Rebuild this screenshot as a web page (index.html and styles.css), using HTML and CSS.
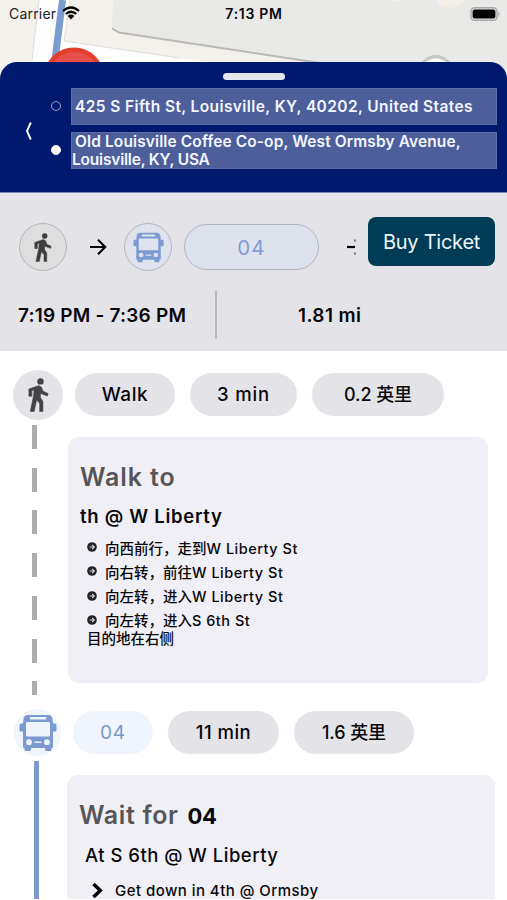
FILE: index.html
```html
<!DOCTYPE html>
<html lang="en">
<head>
<meta charset="utf-8">
<title>Trip details</title>
<link rel="stylesheet" href="styles.css">
</head>
<body>
<svg class="defs" width="0" height="0" aria-hidden="true">
  <symbol id="walk" viewBox="0 0 20 34">
    <circle cx="12" cy="3.400" r="3.200" fill="currentColor"/>
    <path d="M5.500 9.300 10.400 7.600 13 9.200 14.600 13.200 19.600 15.600 18.800 18 12.800 15.800 12.200 14.800 11.800 19.200 14.400 23.400V33.400H11.200V25.600L8.200 21.800 5.600 33.400H1.800L5 18 5.600 11.800 3.400 12.800V18.200H.4V11Z" fill="currentColor" stroke="currentColor" stroke-width=".6" stroke-linejoin="round"/>
  </symbol>
  <symbol id="bus" viewBox="0 0 38 38">
    <path fill="currentColor" fill-rule="evenodd" d="M9 1H29Q33 1 33.500 5L34 9.500H36Q37.500 9.500 37.500 11V16Q37.500 17.500 36 17.500H34V32.500Q34 34 32.500 34V35.500Q32.500 37 31 37H27.500Q26 37 26 35.500V34H12V35.500Q12 37 10.500 37H7Q5.500 37 5.500 35.500V34Q4 34 4 32.500V17.500H2Q.5 17.500 .5 16V11Q.5 9.500 2 9.500H4L4.500 5Q5 1 9 1ZM12 3Q10.700 3 10.700 4.300T12 5.600H26Q27.300 5.600 27.300 4.300T26 3ZM8.500 8Q7 8 7 9.500V21Q7 22.500 8.500 22.500H29.500Q31 22.500 31 21V9.500Q31 8 29.500 8ZM10 25.300A2.900 2.900 0 1 0 10 31.100A2.900 2.900 0 1 0 10 25.300ZM28 25.300A2.900 2.900 0 1 0 28 31.100A2.900 2.900 0 1 0 28 25.300ZM15.500 27.500V29H22.500V27.500Z"/>
  </symbol>
  <symbol id="bullet" viewBox="0 0 10 10">
    <circle cx="5" cy="5" r="4.800" fill="#222226"/>
    <path d="M2.500 5H7M5.200 2.900 7.300 5 5.200 7.100" fill="none" stroke="#d8d8dc" stroke-width="1.100"/>
  </symbol>
</svg>

<div class="screen">
  <section class="map">
    <svg class="map-art" width="507" height="85" viewBox="0 0 507 85">
      <rect width="507" height="85" fill="#f4f0eb"/>
      <path d="M39 0H70L64 41 180 58 380 85H28L32 60Z" fill="#fefefe"/>
      <path d="M39 0 32 60M70 0 64 41 180 58" fill="none" stroke="#dedddb"/>
      <path d="M113 0H507V85H400L315 62 119 32 112 28Z" fill="#e9e9e7"/>
      <path d="M112 28.500 119 32.500 320 63" fill="none" stroke="#b9b9b5" stroke-width="2"/>
      <path d="M386 0H407L397 2ZM436 0H466L458 6 448 8 439 5Z" fill="#f3efe8"/>
      <path d="M62.500 0 55 60" stroke="#7c9ccf" stroke-width="7"/>
      <circle cx="74" cy="78" r="30.500" fill="#e43e2d"/>
      <circle cx="74" cy="78" r="26" fill="#e95049"/>
      <circle cx="436" cy="73" r="18" fill="#c9c8c8"/>
      <circle cx="436" cy="74" r="15.500" fill="#fff"/>
    </svg>
    <div class="status">
      <div class="carrier"><span>Carrier</span>
        <svg width="18" height="14" viewBox="0 0 18 14"><path d="M1 5Q9-2 17 5M3.800 8Q9 3.500 14.200 8" fill="none" stroke="#000" stroke-width="2.300"/><path d="M5.700 10Q9 7.200 12.300 10L9 13.500Z"/></svg>
      </div>
      <span class="clock">7:13 PM</span>
      <svg class="battery" width="31" height="14" viewBox="0 0 31 14"><rect x="1" y=".8" width="26" height="12.400" rx="3.500" fill="#e4e4e2" stroke="#aaa" stroke-width="1.400"/><rect x="2.600" y="2.400" width="22.800" height="9.200" rx="2"/><path d="M28.500 4.500Q30.500 7 28.500 9.500Z" fill="#999"/></svg>
    </div>
  </section>

  <header class="route">
    <div class="handle"></div>
    <div class="route-body">
      <svg class="back" width="9" height="20" viewBox="0 0 9 20"><path d="M6.800 1.500 3 10 6.800 18.500" fill="none" stroke="#fff" stroke-width="1.900"/></svg>
      <div class="stops"><i class="stop"></i><i class="stop stop-end"></i></div>
      <div class="fields">
        <div class="field origin">425 S Fifth St, Louisville, KY, 40202, United States</div>
        <div class="field dest"><span class="dest-a">Old Louisville Coffee Co-op, West Ormsby Avenue,</span><span class="dest-b">Louisville, KY, USA</span></div>
      </div>
    </div>
  </header>

  <section class="summary">
    <div class="legs">
      <div class="leg leg-walk"><svg width="18" height="29"><use href="#walk"/></svg></div>
      <svg class="arrow" width="17" height="18" viewBox="0 0 17 18"><path d="M0 9H15M8 1.800 15.200 9 8 16.200" fill="none" stroke="#000" stroke-width="2.100"/></svg>
      <div class="leg leg-bus"><svg width="31" height="31"><use href="#bus"/></svg></div>
      <div class="leg-line">04</div>
      <svg class="more" width="9" height="18" viewBox="0 0 9 18"><path d="M0 9H8" stroke="#000" stroke-width="2.200"/><path d="M7 1.500H9V3.500H7ZM7 14.500H9V16.500H7Z" fill="#777"/></svg>
      <button class="buy">Buy Ticket</button>
    </div>
    <div class="totals">
      <span class="time">7:19 PM - 7:36 PM</span>
      <span class="divider"></span>
      <span class="distance">1.81 mi</span>
    </div>
  </section>

  <main class="steps">
    <section class="step step-walk">
      <div class="rail">
        <div class="badge"><svg width="21" height="34"><use href="#walk"/></svg></div>
        <div class="dashes"></div>
      </div>
      <div class="detail">
        <div class="pills"><span class="pill p-mode">Walk</span><span class="pill p-time">3 min</span><span class="pill p-dist">0.2 英里</span></div>
        <article class="card">
          <h2>Walk to</h2>
          <h3>th @ W Liberty</h3>
          <ul>
            <li><svg width="10" height="10"><use href="#bullet"/></svg><span>向西前行，走到<b>W Liberty St</b></span></li>
            <li><svg width="10" height="10"><use href="#bullet"/></svg><span>向右转，前往<b>W Liberty St</b></span></li>
            <li><svg width="10" height="10"><use href="#bullet"/></svg><span>向左转，进入<b>W Liberty St</b></span></li>
            <li><svg width="10" height="10"><use href="#bullet"/></svg><span>向左转，进入<b>S 6th St</b></span></li>
          </ul>
          <p class="arrive">目的地在右侧</p>
        </article>
      </div>
    </section>

    <section class="step step-bus">
      <div class="rail">
        <div class="badge"><svg width="38" height="38"><use href="#bus"/></svg></div>
        <div class="line"></div>
      </div>
      <div class="detail">
        <div class="pills"><span class="pill p-route">04</span><span class="pill p-time">11 min</span><span class="pill p-dist">1.6 英里</span></div>
        <article class="card">
          <h2>Wait for <strong>04</strong></h2>
          <p class="at">At S 6th @ W Liberty</p>
          <p class="down"><svg width="11" height="17" viewBox="0 0 11 17"><path d="M1.500 2 8.300 8.500 1.500 15" fill="none" stroke="#000" stroke-width="3.500"/></svg><span>Get down in 4th @ Ormsby</span></p>
        </article>
      </div>
    </section>
  </main>
</div>
</body>
</html>
```
FILE: styles.css
```css
* { box-sizing: border-box; margin: 0; padding: 0; }
body { background: #fff; color: #08080a; font-family: Inter, "Noto Sans CJK SC", sans-serif; }
svg { display: block; flex: none; }
.defs { position: absolute; }
.screen { width: 507px; height: 899px; overflow: hidden; }

.map { position: relative; height: 62px; }
.map-art { position: absolute; top: 0; left: 0; }
.status { position: relative; display: grid; grid-template-columns: 1fr auto 1fr; align-items: center; height: 27px; padding: 0 6px 0 9px; }
.carrier { display: flex; align-items: center; gap: 6px; font-size: 14px; letter-spacing: .19px; color: #222; }
.carrier svg { margin-top: -2px; }
.clock { margin-left: -2px; font-size: 14px; font-weight: 600; letter-spacing: .7px; }
.battery { justify-self: end; }

.route { position: relative; height: 131px; padding: 11px 10px 0 24px; background: #00196f; border-radius: 17px 17px 0 0; border-bottom: 1px solid #7885b4; }
.handle { width: 62px; height: 7px; margin-left: 199px; border-radius: 4px; background: #e5e7ee; }
.route-body { display: flex; margin-top: 8px; }
.back { margin-top: 33px; }
.stops { width: 10px; margin: 13px 10px 0 18px; display: flex; flex-direction: column; gap: 34px; }
.stop { width: 10px; height: 10px; border: 1.500px solid #9aa4d0; border-radius: 50%; }
.stop-end { background: #fff; border-color: #fff; }
.fields { flex: 1; display: flex; flex-direction: column; gap: 7px; color: #f3f6ff; font-size: 15.500px; font-weight: 600; white-space: nowrap; }
.field { height: 37px; background: #4d5f9b; border: 1px solid #5c6ca5; }
.origin { padding-left: 3px; line-height: 35px; letter-spacing: .4px; }
.dest { display: flex; flex-direction: column; line-height: 17.500px; }
.dest-a { padding-left: 3px; letter-spacing: .11px; }
.dest-b { letter-spacing: -.2px; }

.summary { height: 158px; padding-top: 24px; background: #e4e3e8; }
.legs { display: flex; align-items: center; height: 60px; padding-left: 19px; }
.leg { width: 48px; height: 48px; display: grid; place-items: center; border: 1.500px solid #b5b6bb; border-radius: 50%; }
.leg-walk { background: #dedede; color: #3e3e40; }
.leg-bus { margin-left: 17px; background: #dee3ed; color: #7b9bd3; }
.arrow { margin-left: 23px; }
.leg-line { width: 135px; height: 46px; margin-left: 12px; line-height: 45px; text-align: center; font-size: 20.500px; letter-spacing: 1.200px; color: #7f9dd4; border: 1.500px solid #b2b7c2; border-radius: 23px; background: #dde2ec; }
.more { margin-left: 28px; }
.buy { align-self: flex-start; width: 127px; height: 49px; margin-left: 12px; border: 0; border-radius: 8px; background: #003c56; color: #eaf6fb; font: 400 20px Inter, sans-serif; letter-spacing: -.25px; }
.totals { display: flex; align-items: center; height: 48px; margin-top: 14px; padding-left: 18px; font-size: 19px; font-weight: 600; white-space: nowrap; }
.time { width: 197px; letter-spacing: .2px; }
.divider { width: 2px; height: 48px; background: #b8b8bd; }
.distance { margin-left: 81px; letter-spacing: .39px; }

.step { display: flex; }
.step-walk { height: 357px; padding-top: 19px; }
.step-bus { height: 191px; }
.rail { width: 67px; flex: none; display: flex; flex-direction: column; }
.badge { display: grid; place-items: center; border-radius: 50%; background: #e3e3e8; color: #434345; }
.step-walk .badge { width: 50px; height: 50px; margin-left: 13px; }
.step-bus .badge { width: 47px; height: 47px; margin: 1px 0 0 14px; background: #f0f5fc; color: #7b9bd0; }
.dashes { width: 5px; height: 270px; margin: 5px 0 0 32px; background: repeating-linear-gradient(#adadaf 0 24px, #fff 24px 42.750px); }
.line { width: 5px; height: 138px; margin: 5px 0 0 34px; background: #7b99cb; }
.detail { flex: 1; }
.pills { display: flex; gap: 15px; margin-left: 8px; }
.step-walk .pills { margin-top: 3px; }
.step-bus .pills { margin: 3px 0 0 6px; }
.pill { height: 43px; border-radius: 22px; background: #e4e3e8; text-align: center; line-height: 43px; font-size: 18px; font-weight: 500; white-space: nowrap; }
.p-mode { width: 100px; font-size: 19px; letter-spacing: .6px; }
.p-time { width: 107px; font-size: 18.500px; letter-spacing: .8px; }
.p-dist { width: 132px; letter-spacing: -.1px; }
.p-route { width: 80px; font-size: 19px; font-weight: 400; letter-spacing: .8px; background: #f0f5fd; color: #7998ca; }
.step-bus .p-time { width: 111px; letter-spacing: .5px; }
.step-bus .p-dist { width: 120px; }

.card { background: #f0eff5; border-radius: 11px; }
.step-walk .card { width: 420px; height: 246px; margin: 21px 0 0 1px; padding: 25px 12px 0; }
.step-bus .card { width: 428px; height: 140px; margin-top: 21px; padding: 25px 12px 0; }
h2 { font-size: 25px; line-height: 30px; font-weight: 600; letter-spacing: .9px; color: #565658; white-space: nowrap; }
.step-bus h2 { letter-spacing: .65px; }
h2 strong { margin-left: 2px; font-size: 22px; font-weight: 700; letter-spacing: -.3px; color: #050505; }
h3 { margin-top: 12px; font-size: 18.500px; line-height: 24px; font-weight: 600; letter-spacing: .72px; }
ul { list-style: none; margin: 7px 0 0 7px; }
li { display: flex; align-items: center; gap: 8px; height: 24.250px; }
li, .arrive { font-size: 14.500px; font-weight: 500; white-space: nowrap; }
li b { font-weight: 500; letter-spacing: .5px; }
.arrive { margin-left: 7px; line-height: 18px; margin-top: -2px; }
.at { margin: 12px 0 0 6px; font-size: 18.500px; line-height: 24px; font-weight: 500; letter-spacing: .49px; }
.down { display: flex; align-items: center; gap: 12px; height: 24px; margin: 11px 0 0 13px; font-size: 15px; font-weight: 500; letter-spacing: .45px; }
```
